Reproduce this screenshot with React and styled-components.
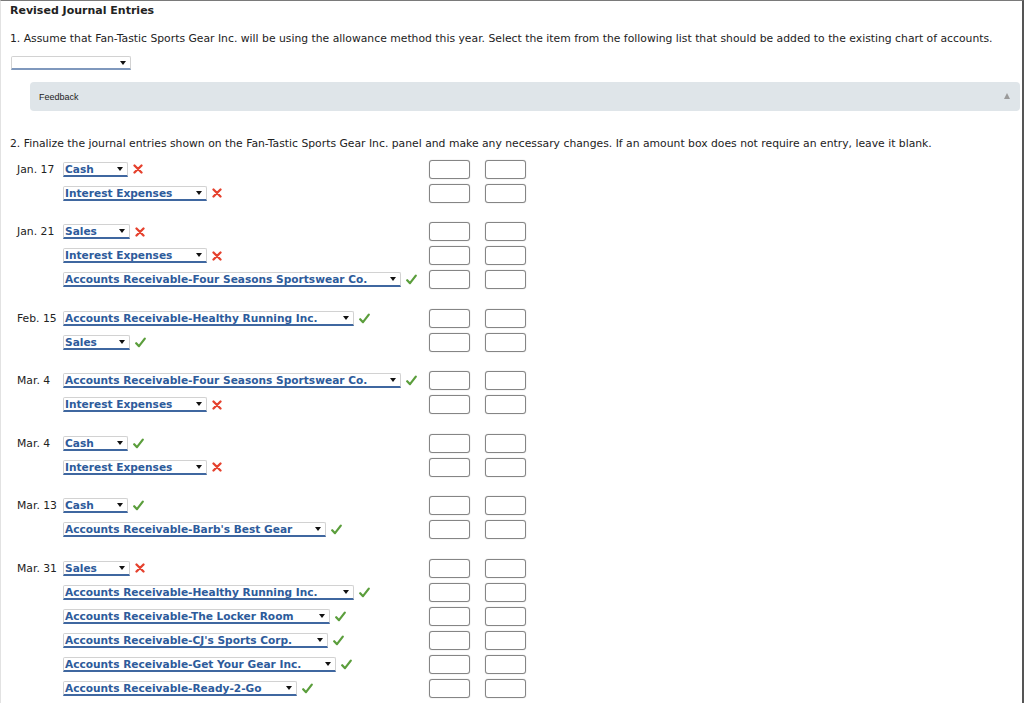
import React from "react";
import styled, { createGlobalStyle } from "styled-components";

const GlobalStyle = createGlobalStyle`
  html, body { margin: 0; padding: 0; background: #fff; }
  body { font-family: "DejaVu Sans", Verdana, sans-serif; color: #222; }
`;

const Frame = styled.div`
  box-sizing: border-box;
  width: 1024px;
  height: 703px;
  overflow: hidden;
  border-top: 1px solid #7a7a7a;
  border-left: 1px solid #e2e2e2;
  border-right: 2px solid #555;
  padding: 3px 0 0 9px;
  position: relative;
`;

const Title = styled.div`
  font-size: 11px;
  font-weight: bold;
  line-height: 14px;
  color: #222;
`;

const Question = styled.div`
  font-size: 10.8px;
  line-height: 14px;
  color: #222;
  margin-top: ${(p) => p.$mt}px;
`;

const SelectBox = styled.div`
  box-sizing: border-box;
  position: relative;
  width: ${(p) => p.$w}px;
  height: ${(p) => (p.$empty ? 14 : 15)}px;
  border: 1px solid #d2d2d2;
  border-bottom: 2px solid ${(p) => (p.$empty ? "#7f98bd" : "#3f67a0")};
  border-radius: 2px 2px 0 0;
  background: #fff;
  font-size: 10.6px;
  font-weight: bold;
  line-height: 12px;
  color: #2d5b9b;
  padding-left: 1px;
  white-space: nowrap;
  flex: none;
`;

const Arrow = styled.span`
  position: absolute;
  right: 4px;
  top: 4px;
  width: 0;
  height: 0;
  border-left: 3px solid transparent;
  border-right: 3px solid transparent;
  border-top: 4px solid #111;
`;

const EmptySelectWrap = styled.div`
  margin-top: 10px;
  margin-left: 1px;
`;

const FeedbackBox = styled.div`
  box-sizing: border-box;
  margin: 12px 0 0 20px;
  width: 990px;
  height: 29px;
  background: #dfe5e9;
  border-radius: 4px;
  display: flex;
  align-items: center;
  justify-content: space-between;
  padding: 0 10px 0 9px;
  font-family: "Liberation Sans", Arial, sans-serif;
  font-size: 9px;
  color: #222;
`;

const UpArrow = styled.span`
  width: 0;
  height: 0;
  border-left: 3.5px solid transparent;
  border-right: 3.5px solid transparent;
  border-bottom: 6px solid #9a9a9a;
  margin-top: -2px;
`;

const Journal = styled.div`
  margin-top: 6px;
  margin-left: 7px;
  display: flex;
  flex-direction: column;
  gap: 14.5px;
`;

const Group = styled.div`
  display: flex;
  flex-direction: column;
`;

const Line = styled.div`
  display: flex;
  align-items: center;
  height: 24px;
`;

const DateLabel = styled.div`
  width: 46px;
  flex: none;
  font-size: 10.8px;
  color: #222;
  white-space: nowrap;
`;

const AccountCell = styled.div`
  width: 366px;
  flex: none;
  display: flex;
  align-items: center;
  gap: 5px;
`;

const Amounts = styled.div`
  display: flex;
  gap: 15px;
`;

const AmountBox = styled.div`
  box-sizing: border-box;
  width: 41px;
  height: 19px;
  border: 1px solid #858585;
  border-radius: 3px;
  box-shadow: 0 0 1px rgba(0, 0, 0, 0.35);
  background: #fff;
`;

const MarkSvg = styled.svg`
  flex: none;
  display: block;
`;

const Cross = () => (
  <MarkSvg width="10" height="10" viewBox="0 0 10 10">
    <path d="M1.5 1.5 L8.5 8.5 M8.5 1.5 L1.5 8.5" stroke="#e5412d" strokeWidth="2.3" strokeLinecap="round" />
  </MarkSvg>
);

const Check = () => (
  <MarkSvg width="11" height="11" viewBox="0 0 11 11">
    <path d="M1.2 6.2 L4 9.2 L9.8 1.6" stroke="#5b9e3c" strokeWidth="2.2" fill="none" strokeLinecap="round" strokeLinejoin="round" />
  </MarkSvg>
);

const Select = ({ w, label }) => (
  <SelectBox $w={w}>
    {label}
    <Arrow />
  </SelectBox>
);

const entries = [
  {
    date: "Jan. 17",
    lines: [
      { label: "Cash", w: 65, ok: false },
      { label: "Interest Expenses", w: 144, ok: false },
    ],
  },
  {
    date: "Jan. 21",
    lines: [
      { label: "Sales", w: 67, ok: false },
      { label: "Interest Expenses", w: 144, ok: false },
      { label: "Accounts Receivable-Four Seasons Sportswear Co.", w: 338, ok: true },
    ],
  },
  {
    date: "Feb. 15",
    lines: [
      { label: "Accounts Receivable-Healthy Running Inc.", w: 291, ok: true },
      { label: "Sales", w: 67, ok: true },
    ],
  },
  {
    date: "Mar. 4",
    lines: [
      { label: "Accounts Receivable-Four Seasons Sportswear Co.", w: 338, ok: true },
      { label: "Interest Expenses", w: 144, ok: false },
    ],
  },
  {
    date: "Mar. 4",
    lines: [
      { label: "Cash", w: 65, ok: true },
      { label: "Interest Expenses", w: 144, ok: false },
    ],
  },
  {
    date: "Mar. 13",
    lines: [
      { label: "Cash", w: 65, ok: true },
      { label: "Accounts Receivable-Barb's Best Gear", w: 263, ok: true },
    ],
  },
  {
    date: "Mar. 31",
    lines: [
      { label: "Sales", w: 67, ok: false },
      { label: "Accounts Receivable-Healthy Running Inc.", w: 291, ok: true },
      { label: "Accounts Receivable-The Locker Room", w: 267, ok: true },
      { label: "Accounts Receivable-CJ's Sports Corp.", w: 265, ok: true },
      { label: "Accounts Receivable-Get Your Gear Inc.", w: 273, ok: true },
      { label: "Accounts Receivable-Ready-2-Go", w: 234, ok: true },
    ],
  },
];

export default function App() {
  return (
    <>
      <GlobalStyle />
      <Frame>
        <Title>Revised Journal Entries</Title>
        <Question $mt={14}>
          1. Assume that Fan-Tastic Sports Gear Inc. will be using the allowance method this year. Select the item from the following list that should be added to the existing chart of accounts.
        </Question>
        <EmptySelectWrap>
          <SelectBox $w={120} $empty>
            <Arrow />
          </SelectBox>
        </EmptySelectWrap>
        <FeedbackBox>
          <span>Feedback</span>
          <UpArrow />
        </FeedbackBox>
        <Question $mt={26}>
          2. Finalize the journal entries shown on the Fan-Tastic Sports Gear Inc. panel and make any necessary changes. If an amount box does not require an entry, leave it blank.
        </Question>
        <Journal>
          {entries.map((g, gi) => (
            <Group key={gi}>
              {g.lines.map((l, li) => (
                <Line key={li}>
                  <DateLabel>{li === 0 ? g.date : ""}</DateLabel>
                  <AccountCell>
                    <Select w={l.w} label={l.label} />
                    {l.ok ? <Check /> : <Cross />}
                  </AccountCell>
                  <Amounts>
                    <AmountBox />
                    <AmountBox />
                  </Amounts>
                </Line>
              ))}
            </Group>
          ))}
        </Journal>
      </Frame>
    </>
  );
}
